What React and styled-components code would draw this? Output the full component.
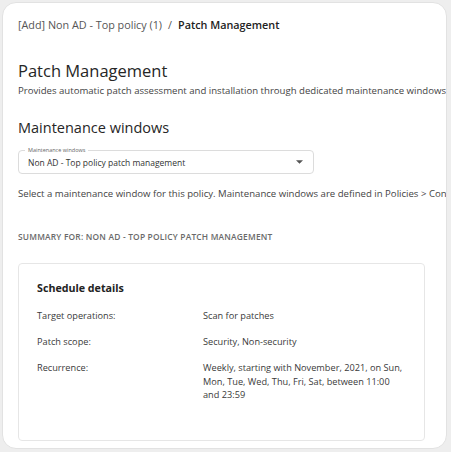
import React from 'react';
import styled, { createGlobalStyle } from 'styled-components';

const GlobalStyle = createGlobalStyle`
  html, body {
    margin: 0;
    padding: 0;
    background: #eeeeee;
  }

  body {
    font-family: 'Open Sans', 'Noto Sans', sans-serif;
    color: #2b2b2b;
  }
`

const Page = styled.div`
  box-sizing: border-box;
  width: 451px;
  height: 452px;
  padding: 2px 4px 3px 2px;
`

const Card = styled.main`
  box-sizing: border-box;
  height: 100%;
  overflow: hidden;

  background: #ffffff;
  border: 1px solid #e2e2e2;
  border-radius: 14px;

  padding: 15px 0 0 15px;
`

const Breadcrumb = styled.nav`
  display: flex;
  align-items: center;
  gap: 6px;

  font-size: 10.8px;
  line-height: 14px;
  white-space: nowrap;
`

const Crumb = styled.span`
  color: ${props => props.current ? '#222222' : '#555555'};
  font-weight: ${props => props.current ? 600 : 400};
`

const Section = styled.section`
  margin-top: ${props => props.gap || 0}px;
`

const Title = styled.h1`
  margin: 0;
  font-size: 16.5px;
  font-weight: 500;
  color: #262626;
  line-height: 20px;
`

const SubTitle = styled.h2`
  margin: 0;
  font-size: 14.5px;
  font-weight: 500;
  color: #262626;
  line-height: 20px;
`

const Text = styled.p`
  margin: ${props => props.top || 0}px 0 0;
  font-size: 9.6px;
  line-height: 12px;
  color: #444444;
  white-space: nowrap;
`

const SelectBox = styled.div`
  position: relative;
  box-sizing: border-box;
  margin-top: 12px;

  display: flex;
  align-items: center;
  justify-content: space-between;

  width: 296px;
  height: 24px;
  padding: 0 10px 0 9px;

  border: 1px solid #dcdcdc;
  border-radius: 4px;
`

const SelectLabel = styled.span`
  position: absolute;
  top: -5px;
  left: 6px;
  padding: 0 3px;

  background: #ffffff;
  font-size: 5.5px;
  line-height: 8px;
  color: #666666;
`

const SelectValue = styled.span`
  font-size: 8.5px;
  color: #333333;
`

const Summary = styled.div`
  margin-top: 31px;
  font-size: 8.4px;
  font-weight: 600;
  letter-spacing: 0.2px;
  text-transform: uppercase;
  color: #6a6a6a;
`

const DetailsCard = styled.div`
  box-sizing: border-box;
  margin-top: 21px;
  width: 407px;
  height: 178px;
  padding: 17px 18px 0;

  border: 1px solid #e6e6e6;
  border-radius: 4px;
`

const DetailsTitle = styled.h3`
  margin: 0 0 14px;
  font-size: 10.7px;
  font-weight: 700;
  color: #222222;
`

const Row = styled.div`
  display: grid;
  grid-template-columns: 166px 1fr;
  margin-top: 12.5px;

  font-size: 9.2px;
  line-height: 13.5px;
  color: #3a3a3a;
`

const Caret = () => (
  <svg width="7" height="4" viewBox="0 0 10 5">
    <path d="M0 0 L10 0 L5 5 Z" fill="#555555" />
  </svg>
)

const details = [
  ['Target operations:', 'Scan for patches'],
  ['Patch scope:', 'Security, Non-security'],
  ['Recurrence:', 'Weekly, starting with November, 2021, on Sun, Mon, Tue, Wed, Thu, Fri, Sat, between 11:00 and 23:59'],
]

function App() {
  return (
    <Page>
      <GlobalStyle />
      <Card>
        <Breadcrumb>
          <Crumb>[Add] Non AD - Top policy (1)</Crumb>
          <Crumb>/</Crumb>
          <Crumb current>Patch Management</Crumb>
        </Breadcrumb>

        <Section gap={29}>
          <Title>Patch Management</Title>
          <Text top={4}>Provides automatic patch assessment and installation through dedicated maintenance windows.</Text>
        </Section>

        <Section gap={21}>
          <SubTitle>Maintenance windows</SubTitle>
          <SelectBox>
            <SelectLabel>Maintenance windows</SelectLabel>
            <SelectValue>Non AD - Top policy patch management</SelectValue>
            <Caret />
          </SelectBox>
          <Text top={14}>Select a maintenance window for this policy. Maintenance windows are defined in Policies &gt; Configuration.</Text>
        </Section>

        <Summary>Summary for: Non AD - Top policy patch management</Summary>

        <DetailsCard>
          <DetailsTitle>Schedule details</DetailsTitle>
          {details.map(([label, value]) => (
            <Row key={label}>
              <span>{label}</span>
              <span>{value}</span>
            </Row>
          ))}
        </DetailsCard>
      </Card>
    </Page>
  )
}

export default App;
